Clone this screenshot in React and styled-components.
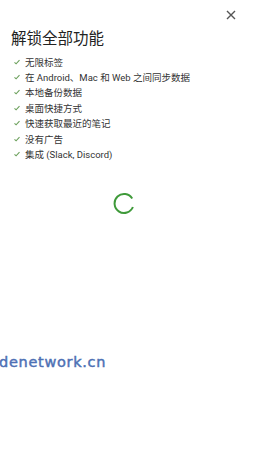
import React from "react";
import styled, { createGlobalStyle } from "styled-components";

const Global = createGlobalStyle`
  html, body { margin: 0; padding: 0; background: #fff; }
  body { font-family: Roboto, "Noto Sans CJK SC", sans-serif; overflow: hidden; }
`;

const Page = styled.div`
  position: relative;
  width: 253px;
  height: 453px;
  background: #fff;
  overflow: hidden;
`;

const TopBar = styled.div`
  display: flex;
  justify-content: flex-end;
  height: 29px;
  padding-right: 16px;
  align-items: center;
`;

const CloseButton = styled.button`
  border: 0;
  background: none;
  padding: 0;
  width: 12px;
  height: 12px;
  display: flex;
  align-items: center;
  justify-content: center;
  cursor: pointer;
`;

const Title = styled.h1`
  margin: 0 0 0 11px;
  font-size: 15.5px;
  line-height: 20px;
  font-weight: 400;
  color: #222;
  font-family: Roboto, "Noto Sans CJK SC", sans-serif;
`;

const List = styled.ul`
  list-style: none;
  margin: 5px 0 0 14px;
  padding: 0;
  display: flex;
  flex-direction: column;
`;

const Item = styled.li`
  display: flex;
  align-items: center;
  gap: 5px;
  height: 15.4px;
  font-size: 9.5px;
  color: #333;
`;

const Check = styled.svg`
  width: 6px;
  height: 6px;
  flex: none;
`;

const SpinnerWrap = styled.div`
  display: flex;
  padding-left: 113px;
  margin-top: 30px;
`;

const Spinner = styled.svg`
  width: 22px;
  height: 22px;
`;

const Watermark = styled.div`
  position: absolute;
  left: -1px;
  top: 354px;
  font-family: "DejaVu Sans", sans-serif;
  font-weight: 400;
  font-size: 14.5px;
  letter-spacing: 0.7px;
  -webkit-text-stroke: 0.45px #4d70b4;
  color: #4d70b4;
  white-space: nowrap;
`;

const features = [
  "无限标签",
  "在 Android、Mac 和 Web 之间同步数据",
  "本地备份数据",
  "桌面快捷方式",
  "快速获取最近的笔记",
  "没有广告",
  "集成 (Slack, Discord)",
];

export default function App() {
  return (
    <Page>
      <Global />
      <TopBar>
        <CloseButton aria-label="关闭">
          <svg width="10" height="10" viewBox="0 0 10 10">
            <path d="M1 1L9 9M9 1L1 9" stroke="#555" strokeWidth="1.4" />
          </svg>
        </CloseButton>
      </TopBar>
      <Title>解锁全部功能</Title>
      <List>
        {features.map((f) => (
          <Item key={f}>
            <Check viewBox="0 0 6 6">
              <path d="M0.5 3.3L2.1 4.8L5.5 1.2" stroke="#6a9f5a" strokeWidth="1.1" fill="none" />
            </Check>
            {f}
          </Item>
        ))}
      </List>
      <SpinnerWrap>
        <Spinner viewBox="0 0 22 22">
          <path
            d="M19.2 6.5 A9.5 9.5 0 1 0 19.9 15"
            stroke="#3f9a3a"
            strokeWidth="2"
            fill="none"
          />
        </Spinner>
      </SpinnerWrap>
      <Watermark>denetwork.cn</Watermark>
    </Page>
  );
}
